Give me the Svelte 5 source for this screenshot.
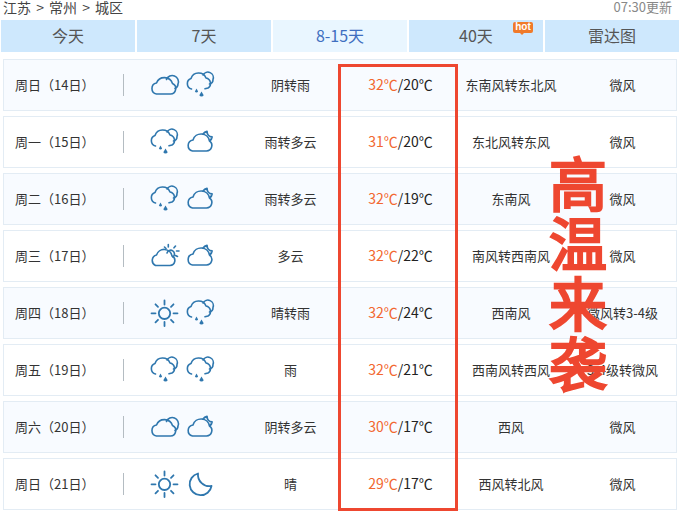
<script>
	let tabs = [
		{ name: "今天" },
		{ name: "7天" },
		{ name: "8-15天", active: true },
		{ name: "40天", hot: true },
		{ name: "雷达图" },
	];

	let days = [
		{ date: "周日（14日）", icons: ["cloud", "rain"], text: "阴转雨", high: "32℃", low: "20℃", wind: "东南风转东北风", level: "微风" },
		{ date: "周一（15日）", icons: ["rain", "moon-cloud"], text: "雨转多云", high: "31℃", low: "20℃", wind: "东北风转东风", level: "微风" },
		{ date: "周二（16日）", icons: ["rain", "moon-cloud"], text: "雨转多云", high: "32℃", low: "19℃", wind: "东南风", level: "微风" },
		{ date: "周三（17日）", icons: ["sun-cloud", "moon-cloud"], text: "多云", high: "32℃", low: "22℃", wind: "南风转西南风", level: "微风" },
		{ date: "周四（18日）", icons: ["sun", "rain"], text: "晴转雨", high: "32℃", low: "24℃", wind: "西南风", level: "微风转3-4级" },
		{ date: "周五（19日）", icons: ["rain", "rain"], text: "雨", high: "32℃", low: "21℃", wind: "西南风转西风", level: "3-4级转微风" },
		{ date: "周六（20日）", icons: ["cloud", "moon-cloud"], text: "阴转多云", high: "30℃", low: "17℃", wind: "西风", level: "微风" },
		{ date: "周日（21日）", icons: ["sun", "moon"], text: "晴", high: "29℃", low: "17℃", wind: "西风转北风", level: "微风" },
	];
</script>

{#snippet icon(kind)}
	<svg class="icon" viewBox="0 0 30 30" width="30" height="30" fill="none" stroke="#2f77ae" stroke-width="1.6" stroke-linecap="round" stroke-linejoin="round">
		{#if kind === "cloud"}
			<path d="M6.500 24h14a5.500 5.500 0 0 0 2-10.500a8.500 8.500 0 0 0-16-.5a5.600 5.600 0 0 0 0 11z" />
			<path d="M16.500 9.500a6 6 0 0 1 11.500 4.500a5 5 0 0 1-3 4.500" />
		{:else if kind === "rain"}
			<path d="M5.500 19a5.500 5.500 0 0 1-.5-10.500a8 8 0 0 1 15-.5a5.500 5.500 0 0 1 2 10l-3 .8" />
			<path d="M17 5a5.500 5.500 0 0 1 10 4.500a4.500 4.500 0 0 1-3.500 4.500" />
			<path d="M10.500 18.500l1.600 3a1.800 1.800 0 0 1-3.200 0z" fill="#2f77ae" stroke="none" />
			<path d="M15.500 21.500l2.200 3.800a2.500 2.500 0 0 1-4.400 0z" fill="#2f77ae" stroke="none" />
		{:else if kind === "moon-cloud"}
			<path d="M6.500 24h14a5.500 5.500 0 0 0 3-10a8.500 8.500 0 0 0-16.500-1a5.600 5.600 0 0 0-.5 11z" />
			<path d="M17 7a7 7 0 0 1 4-2.500a5.500 5.500 0 0 0 5 5.500a5.500 5.500 0 0 1-2 3.500" stroke-width="1.800" />
		{:else if kind === "sun-cloud"}
			<path d="M5.500 24.500h14.500a5 5 0 0 0 2-9.500a8 8 0 0 0-15.500-1a5.600 5.600 0 0 0-1 10.500z" />
			<path d="M17 12a3.800 3.800 0 1 1 6 4" />
			<path d="M18.300 3.500v2.500M25.500 5l-1.500 1.800M29 10h-2.500M27.500 15.500l-2-1M14.500 6l1.500 1.500" />
		{:else if kind === "sun"}
			<circle cx="14.500" cy="15.300" r="5.700" stroke-width="1.800" />
			<path d="M14.500 2.500v4M14.500 24v4M1.500 15.300h4M23.500 15.300h4M5.500 6.300l2.500 2.500M21 21.800l2.500 2.500M23.500 6.300l-2.500 2.500M8 21.800l-2.500 2.500" stroke-width="1.800" />
		{:else}
			<path d="M12 4.500a11 11 0 1 0 13.500 12.500a11.500 11.500 0 0 1-13.500-12.500z" stroke-width="1.800" />
		{/if}
	</svg>
{/snippet}

<div class="page">
	<header class="crumbs">
		<span class="path">江苏 &gt; 常州 &gt; 城区</span>
		<span class="updated">07:30更新</span>
	</header>

	<nav class="tabs">
		{#each tabs as tab}
			<div class="tab" class:active={tab.active}>
				{tab.name}
				{#if tab.hot}<span class="hot">hot</span>{/if}
			</div>
		{/each}
	</nav>

	<div class="list">
		{#each days as day, i}
			<div class="row" class:tint={i % 2 === 0}>
				<div class="date">{day.date}</div>
				<div class="icons">
					{@render icon(day.icons[0])}
					{@render icon(day.icons[1])}
				</div>
				<div class="cell">{day.text}</div>
				<div class="cell temp"><span class="high">{day.high}</span>/{day.low}</div>
				<div class="cell">{day.wind}</div>
				<div class="cell level">{day.level}</div>
			</div>
		{/each}

		<div class="redbox"></div>
		<div class="stamp">
			<span>高</span><span>温</span><span>来</span><span>袭</span>
		</div>
	</div>
</div>

<style>
	:global(body) {
		background: #fff;
	}

	.page {
		width: 687px;
		height: 517px;
		overflow: hidden;
		font-family: "Noto Sans CJK SC", "Noto Sans", sans-serif;
		font-size: 13px;
		color: #333;
	}

	.crumbs {
		display: flex;
		justify-content: space-between;
		height: 20px;
		padding: 0 15px 0 3px;
		line-height: 14px;
	}

	.path {
		font-size: 14px;
		word-spacing: 2px;
		color: #444;
	}

	.updated {
		font-size: 13px;
		color: #888;
	}

	.tabs {
		display: flex;
		gap: 2px;
		padding-left: 1px;
		width: 678px;
	}

	.tab {
		position: relative;
		width: 134px;
		height: 32px;
		line-height: 31px;
		text-align: center;
		font-size: 16px;
		background: #cee8fd;
		color: #555;
	}

	.tab.active {
		background: #e9f6ff;
		color: #3f6fc0;
	}

	.hot {
		position: absolute;
		top: 2px;
		left: 104px;
		width: 20px;
		height: 11px;
		border-radius: 2px;
		background: #f07a2a;
		color: #fff;
		font-size: 10px;
		font-weight: 700;
		line-height: 10px;
		font-family: "Liberation Sans", sans-serif;
	}

	.hot::after {
		content: "";
		position: absolute;
		left: 7px;
		top: 11px;
		border: 2px solid transparent;
		border-top-color: #f07a2a;
		border-bottom: 0;
	}

	.list {
		position: relative;
		display: flex;
		flex-direction: column;
		gap: 5px;
		margin: 7px 0 0 3px;
		width: 674px;
	}

	.row {
		display: grid;
		grid-template-columns: 120px 110px 113px 107px 114px 1fr;
		align-items: center;
		box-sizing: border-box;
		height: 52px;
		border: 1px solid #e3ecf4;
		background: #fff;
	}

	.row.tint {
		background: #f8fbff;
	}

	.date {
		padding-left: 11px;
		height: 22px;
		line-height: 21px;
		font-size: 13px;
		color: #333;
		border-right: 1px solid #b4bcc2;
	}

	.icons {
		display: flex;
		gap: 6px;
		padding-left: 26px;
	}

	.icon {
		display: block;
	}

	.cell {
		padding-bottom: 2px;
		text-align: center;
		font-size: 13px;
	}

	.level {
		padding-left: 1px;
	}

	.temp {
		font-size: 14px;
		color: #222;
	}

	.high {
		color: #f2672f;
	}

	.redbox {
		position: absolute;
		left: 335px;
		top: 5px;
		width: 120px;
		height: 447px;
		box-sizing: border-box;
		border: 3.500px solid #ee4730;
	}

	.stamp {
		position: absolute;
		left: 545px;
		top: 92px;
		display: flex;
		flex-direction: column;
		width: 60px;
		font-size: 58px;
		line-height: 60px;
		font-weight: 400;
		color: #ee4730;
		-webkit-text-stroke: 2.500px #ee4730;
		text-align: center;
	}
</style>
